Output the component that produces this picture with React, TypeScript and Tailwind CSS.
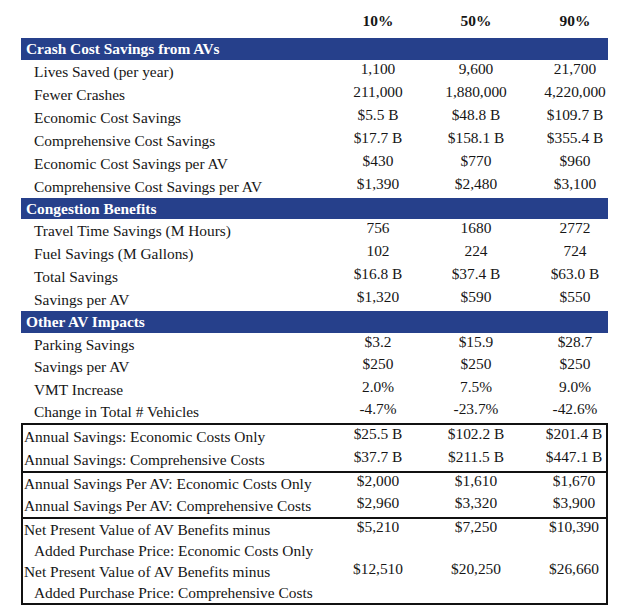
import React from "react";

type Row = { label: string; values: string[]; h?: string };

const crashRows: Row[] = [
  { label: "Lives Saved (per year)", values: ["1,100", "9,600", "21,700"] },
  { label: "Fewer Crashes", values: ["211,000", "1,880,000", "4,220,000"] },
  { label: "Economic Cost Savings", values: ["$5.5 B", "$48.8 B", "$109.7 B"] },
  { label: "Comprehensive Cost Savings", values: ["$17.7 B", "$158.1 B", "$355.4 B"] },
  { label: "Economic Cost Savings per AV", values: ["$430", "$770", "$960"] },
  { label: "Comprehensive Cost Savings per AV", values: ["$1,390", "$2,480", "$3,100"] },
];

const congestionRows: Row[] = [
  { label: "Travel Time Savings (M Hours)", values: ["756", "1680", "2772"] },
  { label: "Fuel Savings (M Gallons)", values: ["102", "224", "724"] },
  { label: "Total Savings", values: ["$16.8 B", "$37.4 B", "$63.0 B"] },
  { label: "Savings per AV", values: ["$1,320", "$590", "$550"] },
];

const otherRows: Row[] = [
  { label: "Parking Savings", values: ["$3.2", "$15.9", "$28.7"], h: "h-[23px]" },
  { label: "Savings per AV", values: ["$250", "$250", "$250"], h: "h-[22px]" },
  { label: "VMT Increase", values: ["2.0%", "7.5%", "9.0%"], h: "h-[23px]" },
  { label: "Change in Total # Vehicles", values: ["-4.7%", "-23.7%", "-42.6%"], h: "h-[22px]" },
];

function Values({ values }: { values: string[] }) {
  return (
    <>
      <div className="text-center pb-[6px]">{values[0]}</div>
      <div className="text-center pb-[6px]">{values[1]}</div>
      <div className="text-center pb-[6px] pl-[17px]">{values[2]}</div>
    </>
  );
}

function DataRow({ row }: { row: Row }) {
  return (
    <div className={`grid grid-cols-[308px_98px_98px_1fr] items-center ${row.h ?? "h-[23px]"}`}>
      <div className="pl-[13px]">{row.label}</div>
      <Values values={row.values} />
    </div>
  );
}

function SectionBar({ title, h }: { title: string; h: string }) {
  return (
    <div className={`bg-[#26408b] text-white font-bold flex items-center pl-[5px] ${h}`}>
      {title}
    </div>
  );
}

function BoxRow({ label, values, h }: { label: string; values: string[]; h: string }) {
  return (
    <div className={`grid grid-cols-[306px_98px_98px_1fr] items-center ${h}`}>
      <div className="pl-[1px]">{label}</div>
      <Values values={values} />
    </div>
  );
}

export default function App() {
  return (
    <div
      className="w-[621px] h-[606px] overflow-hidden bg-white text-[15.4px] text-[#161616] leading-none"
      style={{ fontFamily: '"Liberation Serif", "Times New Roman", serif' }}
    >
      <div className="w-[587px] ml-[21px]">
        <div className="grid grid-cols-[308px_98px_98px_1fr] h-[38px] items-center pt-[4px] font-bold">
          <div></div>
          <div className="text-center">10%</div>
          <div className="text-center">50%</div>
          <div className="text-center pl-[17px]">90%</div>
        </div>

        <SectionBar title="Crash Cost Savings from AVs" h="h-[22px]" />
        {crashRows.map((r, i) => (
          <DataRow key={i} row={r} />
        ))}

        <SectionBar title="Congestion Benefits" h="h-[21px]" />
        {congestionRows.map((r, i) => (
          <DataRow key={i} row={r} />
        ))}

        <SectionBar title="Other AV Impacts" h="h-[22px]" />
        {otherRows.map((r, i) => (
          <DataRow key={i} row={r} />
        ))}

        <div className="border-2 border-[#111] divide-y-2 divide-[#111]">
          <div>
            <BoxRow label="Annual Savings: Economic Costs Only" values={["$25.5 B", "$102.2 B", "$201.4 B"]} h="h-[23px]" />
            <BoxRow label="Annual Savings: Comprehensive Costs" values={["$37.7 B", "$211.5 B", "$447.1 B"]} h="h-[23px]" />
          </div>
          <div>
            <BoxRow label="Annual Savings Per AV: Economic Costs Only" values={["$2,000", "$1,610", "$1,670"]} h="h-[22px]" />
            <BoxRow label="Annual Savings Per AV: Comprehensive Costs" values={["$2,960", "$3,320", "$3,900"]} h="h-[22px]" />
          </div>
          <div>
            <div className="grid grid-cols-[306px_98px_98px_1fr] items-start">
              <div className="pl-[1px] leading-[21px]">
                <div>Net Present Value of AV Benefits minus</div>
                <div className="pl-[10px]">Added Purchase Price: Economic Costs Only</div>
              </div>
              <div className="text-center leading-[16px]">$5,210</div>
              <div className="text-center leading-[16px]">$7,250</div>
              <div className="text-center leading-[16px] pl-[17px]">$10,390</div>
            </div>
            <div className="grid grid-cols-[306px_98px_98px_1fr] items-start">
              <div className="pl-[1px] leading-[21px]">
                <div>Net Present Value of AV Benefits minus</div>
                <div className="pl-[10px]">Added Purchase Price: Comprehensive Costs</div>
              </div>
              <div className="text-center leading-[16px]">$12,510</div>
              <div className="text-center leading-[16px]">$20,250</div>
              <div className="text-center leading-[16px] pl-[17px]">$26,660</div>
            </div>
          </div>
        </div>
      </div>
    </div>
  );
}
